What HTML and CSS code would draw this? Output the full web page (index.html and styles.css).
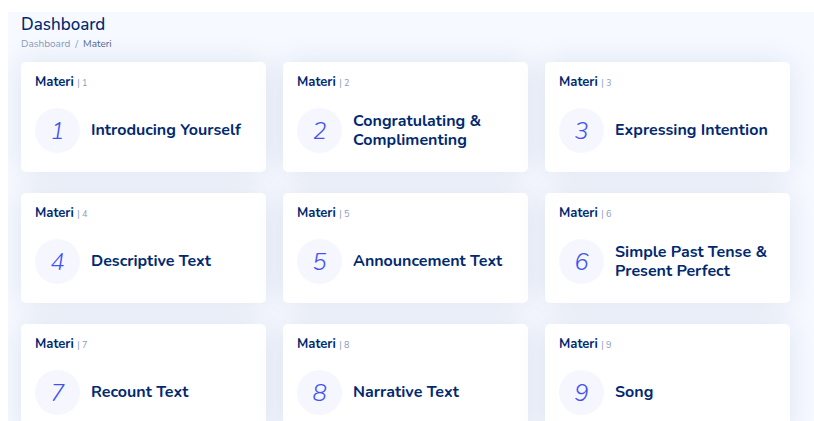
FILE: index.html
```html
<!DOCTYPE html>
<html lang="id">
<head>
<meta charset="utf-8">
<title>Dashboard - Materi</title>
<link rel="stylesheet" href="styles.css">
</head>
<body>
<main class="main">
  <div class="pagetitle">
    <h1>Dashboard</h1>
    <nav class="breadcrumb">
      <span class="crumb">Dashboard</span>
      <span class="sep">/</span>
      <span class="crumb active">Materi</span>
    </nav>
  </div>

  <section class="materi-grid">
    <div class="card">
      <h5 class="card-title">Materi <span class="num">| 1</span></h5>
      <div class="card-body">
        <div class="circle">1</div>
        <div class="topic">Introducing Yourself</div>
      </div>
    </div>
    <div class="card">
      <h5 class="card-title">Materi <span class="num">| 2</span></h5>
      <div class="card-body">
        <div class="circle">2</div>
        <div class="topic">Congratulating &amp; Complimenting</div>
      </div>
    </div>
    <div class="card">
      <h5 class="card-title">Materi <span class="num">| 3</span></h5>
      <div class="card-body">
        <div class="circle">3</div>
        <div class="topic">Expressing Intention</div>
      </div>
    </div>
    <div class="card">
      <h5 class="card-title">Materi <span class="num">| 4</span></h5>
      <div class="card-body">
        <div class="circle">4</div>
        <div class="topic">Descriptive Text</div>
      </div>
    </div>
    <div class="card">
      <h5 class="card-title">Materi <span class="num">| 5</span></h5>
      <div class="card-body">
        <div class="circle">5</div>
        <div class="topic">Announcement Text</div>
      </div>
    </div>
    <div class="card">
      <h5 class="card-title">Materi <span class="num">| 6</span></h5>
      <div class="card-body">
        <div class="circle">6</div>
        <div class="topic">Simple Past Tense &amp; Present Perfect</div>
      </div>
    </div>
    <div class="card">
      <h5 class="card-title">Materi <span class="num">| 7</span></h5>
      <div class="card-body">
        <div class="circle">7</div>
        <div class="topic">Recount Text</div>
      </div>
    </div>
    <div class="card">
      <h5 class="card-title">Materi <span class="num">| 8</span></h5>
      <div class="card-body">
        <div class="circle">8</div>
        <div class="topic">Narrative Text</div>
      </div>
    </div>
    <div class="card">
      <h5 class="card-title">Materi <span class="num">| 9</span></h5>
      <div class="card-body">
        <div class="circle">9</div>
        <div class="topic">Song</div>
      </div>
    </div>
  </section>
</main>
</body>
</html>
```

FILE: styles.css
```css
html, body {
  margin: 0;
  padding: 0;
  background: #ffffff;
  overflow: hidden;
}

body {
  font-family: "Nunito", "Open Sans", "Noto Sans", sans-serif;
  color: #444444;
}

.main {
  margin: 12px 0 0 8px;
  padding: 2px 24px 40px 13px;
  background: #f6f9ff;
  height: 409px;
  box-sizing: border-box;
  overflow: hidden;
}

.pagetitle h1 {
  margin: 0 0 2px;
  font-size: 17px;
  font-weight: 500;
  line-height: 22px;
  color: #012970;
}

.breadcrumb {
  display: flex;
  gap: 5px;
  font-size: 10px;
  line-height: 13px;
  color: #899bbd;
}

.breadcrumb .active {
  color: #51678f;
}

.materi-grid {
  margin-top: 11px;
  display: grid;
  grid-template-columns: repeat(3, 245px);
  column-gap: 17px;
  row-gap: 21px;
}

.card {
  background: #ffffff;
  border-radius: 5px;
  box-shadow: 0 0 30px rgba(1, 41, 112, 0.1);
  height: 110px;
  box-sizing: border-box;
  padding: 12px 14px 20px 14px;
}

.card-title {
  margin: 0;
  font-size: 13px;
  font-weight: 700;
  line-height: 16px;
  color: #012970;
}

.card-title .num {
  font-size: 9px;
  font-weight: 400;
  color: #899bbd;
}

.card-body {
  margin-top: 17px;
  display: flex;
  align-items: center;
  gap: 11px;
}

.circle {
  flex: none;
  width: 45px;
  height: 45px;
  border-radius: 50%;
  background: #f6f6fe;
  color: #4154f1;
  display: flex;
  align-items: center;
  justify-content: center;
  font-size: 24px;
  font-weight: 300;
  font-style: italic;
}

.topic {
  font-size: 16px;
  font-weight: 700;
  line-height: 19px;
  color: #012970;
}
```
